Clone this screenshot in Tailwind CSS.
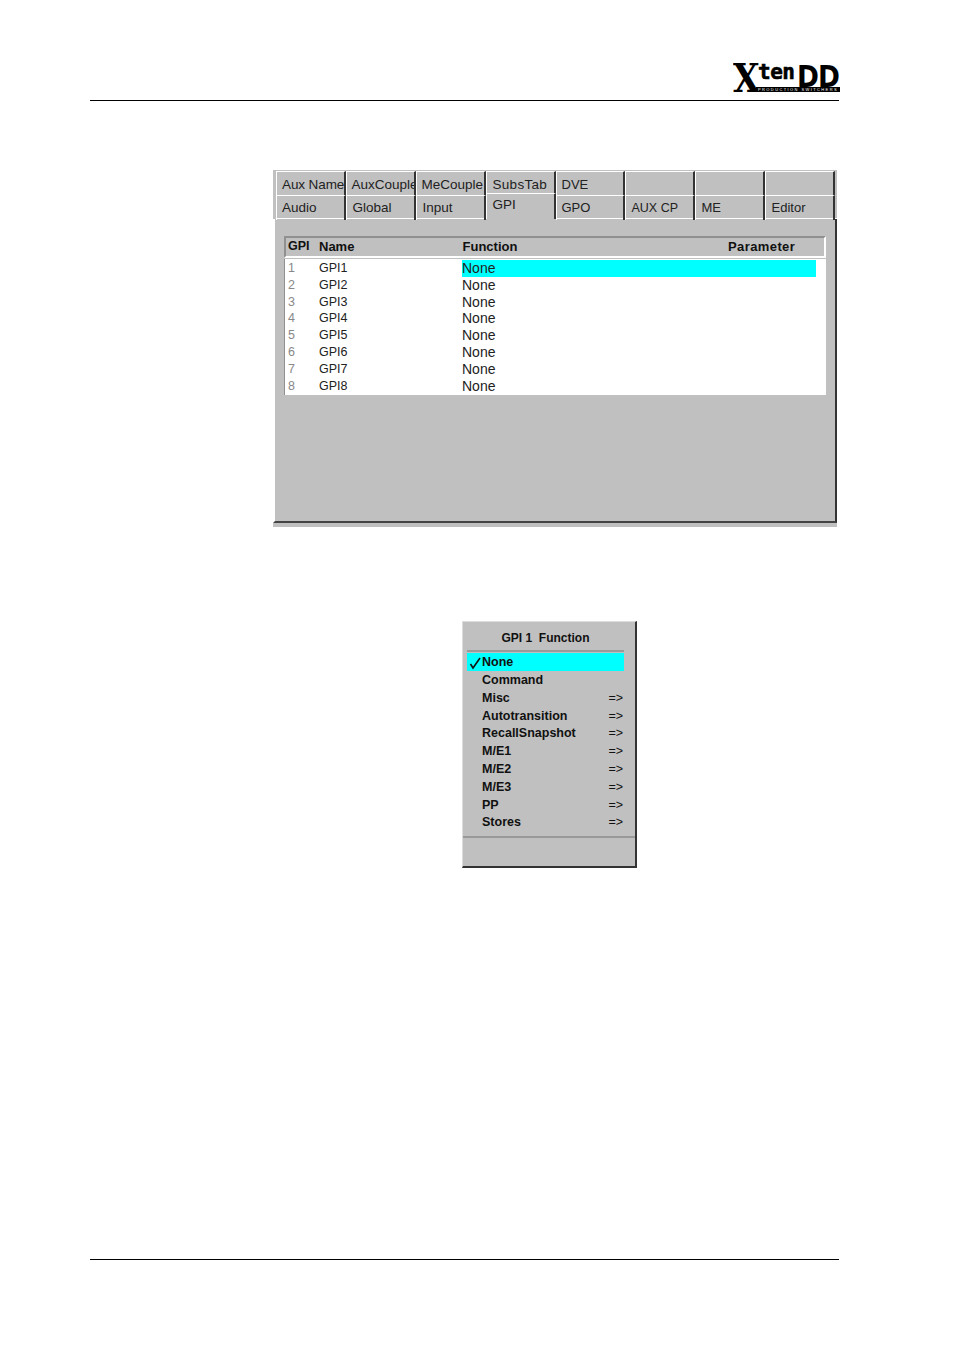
<!DOCTYPE html>
<html lang="en">
  <head>
    <meta charset="UTF-8" />
    <title>GPI</title>
    <script src="https://cdn.jsdelivr.net/npm/@tailwindcss/browser@4"></script>
  </head>
  <body class="bg-white text-black font-['Liberation_Sans',Arial,sans-serif]">
    <div class="w-[954px] h-[1351px] overflow-hidden flex flex-col">
      <!-- header -->
      <header class="ml-[90px] w-[749px] mt-[62px] h-[39px] border-b border-black flex justify-end">
        <div class="relative w-[107px] h-[32px] -mr-[1px]">
          <span class="absolute left-0 top-[1px] text-[39px] leading-[30px] font-bold font-['DejaVu_Serif',serif] scale-x-[.88] origin-left">X</span>
          <span class="absolute left-[25px] top-[1px] text-[21px] leading-[19px] font-bold font-['DejaVu_Sans_Mono',monospace] tracking-[-.5px] [-webkit-text-stroke:.6px_black]">ten</span>
          <span class="absolute left-[64px] top-[3px] text-[30px] leading-[24px] font-bold font-['DejaVu_Sans',sans-serif] scale-x-[.88] origin-left tracking-[-1px]">DD</span>
          <div class="absolute left-[23px] right-0 top-[25px] bg-black text-white text-[4px] leading-[5px] h-[5px] tracking-[1.4px] pl-[2px] whitespace-nowrap overflow-hidden">PRODUCTION SWITCHERS</div>
        </div>
      </header>

      <!-- tab panel -->
      <section class="ml-[273px] mt-[69px] w-[564px] h-[353px] bg-[#c0c0c0] shadow-[0_4px_0_#c0c0c0] flex flex-col">
        <div class="grid grid-cols-[69.5px_70px_70px_70px_69px_70px_70px_70px] ml-[3px] mt-[1px] h-[24px] text-[13.5px] leading-[25px] text-[#222]">
          <div class="border-t border-l border-white border-r-2 border-r-[#333] pl-[5px] whitespace-nowrap tracking-[-.1px]">Aux Name</div>
          <div class="border-t border-l border-white border-r-2 border-r-[#333] pl-[5px] whitespace-nowrap overflow-hidden">AuxCouple</div>
          <div class="border-t border-l border-white border-r-2 border-r-[#333] pl-[5px] whitespace-nowrap overflow-hidden">MeCouple</div>
          <div class="border-t border-l border-white border-r-2 border-r-[#333] pl-[6px] whitespace-nowrap tracking-[.3px]">SubsTab</div>
          <div class="border-t border-l border-white border-r-2 border-r-[#333] pl-[5px] text-[13px]">DVE</div>
          <div class="border-t border-l border-white border-r-2 border-r-[#333]"></div>
          <div class="border-t border-l border-white border-r-2 border-r-[#333]"></div>
          <div class="border-t border-l border-white border-r-2 border-r-[#333]"></div>
        </div>
        <div class="grid grid-cols-[69.5px_70px_70px_70px_69px_70px_70px_70px] ml-[3px] h-[24px] text-[13.5px] leading-[24px] text-[#222] border-b border-white">
          <div class="border-t border-l border-white border-r-2 border-r-[#333] pl-[5px]">Audio</div>
          <div class="border-t border-l border-white border-r-2 border-r-[#333] pl-[6px]">Global</div>
          <div class="border-t border-l border-white border-r-2 border-r-[#333] pl-[6px]">Input</div>
          <div class="relative -mt-[2px] h-[26px] bg-[#c0c0c0] border-t border-l border-white border-r-2 border-r-[#333] pl-[6px] leading-[21px]">GPI</div>
          <div class="border-t border-l border-white border-r-2 border-r-[#333] pl-[5px] text-[13px]">GPO</div>
          <div class="border-t border-l border-white border-r-2 border-r-[#333] pl-[6px] text-[12.5px]">AUX CP</div>
          <div class="border-t border-l border-white border-r-2 border-r-[#333] pl-[6px] text-[13px]">ME</div>
          <div class="border-t border-l border-white border-r-2 border-r-[#333] pl-[6px] text-[13px]">Editor</div>
        </div>
        <div class="flex-1 border-l-2 border-l-white border-r-2 border-r-[#333] border-b-2 border-b-[#444] pt-[17px] pl-[9px]">
          <div class="w-[542px] h-[22px] pb-[1px] border-t-2 border-l-2 border-t-[#909090] border-l-[#909090] border-r-2 border-r-white border-b-2 border-b-white flex items-center text-[13px] font-bold text-[#111] leading-none">
            <span class="ml-[2px] w-[31px] text-[12.5px]">GPI</span>
            <span class="w-[143.5px]">Name</span>
            <span class="w-[265.5px]">Function</span>
            <span class="tracking-[.4px]">Parameter</span>
          </div>
          <div class="w-[542px] h-[136px] mt-[1px] bg-white border-l border-l-[#909090] pt-[1px] text-[12.5px] leading-[16.8px] text-[#222]">
            <div class="flex"><span class="w-[34px] pl-[3px] text-[#888]">1</span><span class="w-[143px]">GPI1</span><span class="w-[354px] bg-[#00ffff] h-[16.8px] text-[14px]">None</span></div>
            <div class="flex"><span class="w-[34px] pl-[3px] text-[#888]">2</span><span class="w-[143px]">GPI2</span><span class="text-[14px]">None</span></div>
            <div class="flex"><span class="w-[34px] pl-[3px] text-[#888]">3</span><span class="w-[143px]">GPI3</span><span class="text-[14px]">None</span></div>
            <div class="flex"><span class="w-[34px] pl-[3px] text-[#888]">4</span><span class="w-[143px]">GPI4</span><span class="text-[14px]">None</span></div>
            <div class="flex"><span class="w-[34px] pl-[3px] text-[#888]">5</span><span class="w-[143px]">GPI5</span><span class="text-[14px]">None</span></div>
            <div class="flex"><span class="w-[34px] pl-[3px] text-[#888]">6</span><span class="w-[143px]">GPI6</span><span class="text-[14px]">None</span></div>
            <div class="flex"><span class="w-[34px] pl-[3px] text-[#888]">7</span><span class="w-[143px]">GPI7</span><span class="text-[14px]">None</span></div>
            <div class="flex"><span class="w-[34px] pl-[3px] text-[#888]">8</span><span class="w-[143px]">GPI8</span><span class="text-[14px]">None</span></div>
          </div>
        </div>
      </section>

      <!-- function menu -->
      <section class="ml-[462px] mt-[98px] w-[175px] h-[247px] bg-[#c0c0c0] border-t border-t-[#ddd] border-l border-l-[#ddd] border-r-2 border-r-[#333] border-b-2 border-b-[#333] flex flex-col text-[12.5px] font-bold text-[#111]">
        <div class="h-[30px] ml-[4px] mr-[11px] border-b-2 border-b-[#999] text-center text-[12px] leading-[32px] whitespace-pre">GPI 1  Function</div>
        <div class="ml-[4px] w-[157px] mt-[1px]">
          <div class="flex h-[18px] leading-[19px] bg-[#00ffff] pr-[2px]">
            <svg class="w-[15px] h-[18px]" viewBox="0 0 15 18"><path d="M3.5 11 L6 15 L13 5" fill="none" stroke="#111" stroke-width="1.6"/></svg>
            <span>None</span>
          </div>
          <div class="flex h-[17.8px] leading-[18px] pl-[15px]"><span>Command</span></div>
          <div class="flex justify-between h-[17.8px] leading-[18px] pl-[15px] pr-[1px]"><span>Misc</span><span class="font-normal">=&gt;</span></div>
          <div class="flex justify-between h-[17.8px] leading-[18px] pl-[15px] pr-[1px]"><span>Autotransition</span><span class="font-normal">=&gt;</span></div>
          <div class="flex justify-between h-[17.8px] leading-[18px] pl-[15px] pr-[1px]"><span>RecallSnapshot</span><span class="font-normal">=&gt;</span></div>
          <div class="flex justify-between h-[17.8px] leading-[18px] pl-[15px] pr-[1px]"><span>M/E1</span><span class="font-normal">=&gt;</span></div>
          <div class="flex justify-between h-[17.8px] leading-[18px] pl-[15px] pr-[1px]"><span>M/E2</span><span class="font-normal">=&gt;</span></div>
          <div class="flex justify-between h-[17.8px] leading-[18px] pl-[15px] pr-[1px]"><span>M/E3</span><span class="font-normal">=&gt;</span></div>
          <div class="flex justify-between h-[17.8px] leading-[18px] pl-[15px] pr-[1px]"><span>PP</span><span class="font-normal">=&gt;</span></div>
          <div class="flex justify-between h-[17.8px] leading-[18px] pl-[15px] pr-[1px]"><span>Stores</span><span class="font-normal">=&gt;</span></div>
        </div>
        <div class="mt-[5px] border-t-2 border-t-[#999]"></div>
      </section>

      <!-- footer rule -->
      <footer class="ml-[90px] w-[749px] mt-[391px] border-b border-black"></footer>
    </div>
  </body>
</html>
